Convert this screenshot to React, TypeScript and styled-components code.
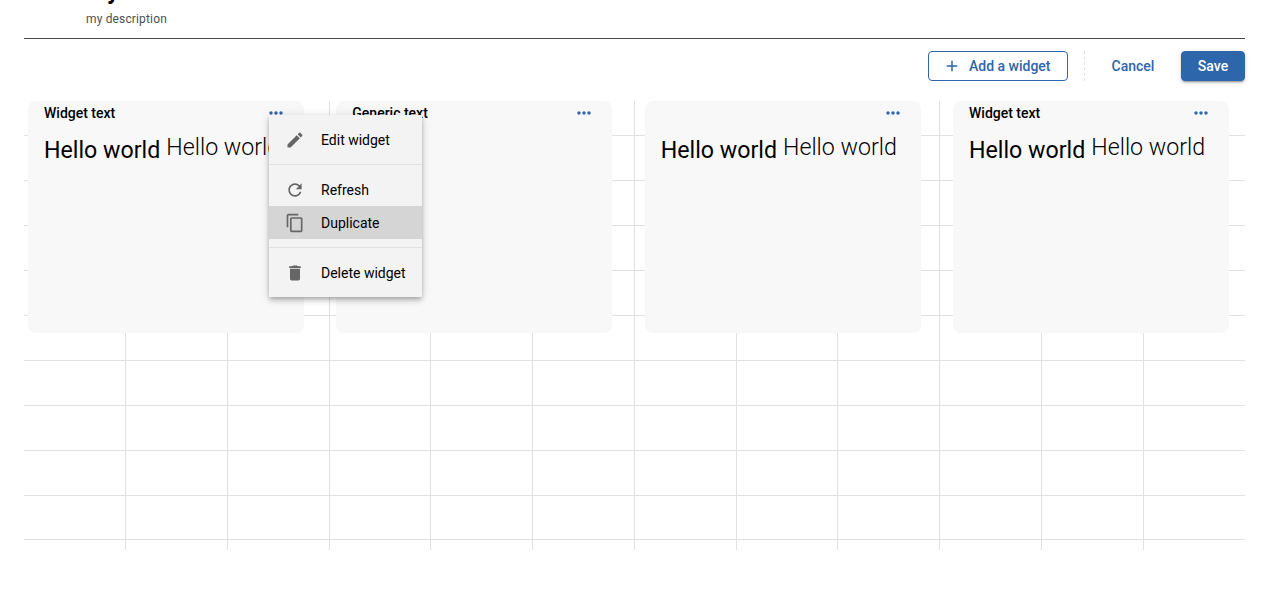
import React from "react";
import styled, { createGlobalStyle } from "styled-components";

const BLUE = "#2d66ab";
const LINE = "#e1e1e1";

const columnLines = [101, 203, 305, 406, 508, 610, 712, 813, 915, 1017, 1119];
const rowLines = [34, 79, 124, 169, 214, 259, 304, 349, 394, 438];

const gridBackground = [
  ...columnLines.map((x) => `linear-gradient(${LINE}, ${LINE}) ${x}px 0 / 1px 100% no-repeat`),
  ...rowLines.map((y) => `linear-gradient(${LINE}, ${LINE}) 0 ${y}px / 100% 1px no-repeat`),
].join(", ");

const GlobalStyle = createGlobalStyle`
  * { box-sizing: border-box; }
  html, body { margin: 0; background: #fff; overflow: hidden; }
  body { font-family: Roboto, "Liberation Sans", sans-serif; font-size: 14px; color: #000; }
`;

const Page = styled.div`
  height: 590px;
  padding: 0 35px 0 24px;
  overflow: hidden;
`;

const Header = styled.header`
  display: flow-root;
  height: 39px;
  padding-left: 62px;
  border-bottom: 1px solid #4a4a4a;
`;

const Title = styled.h1`
  margin: -21px 0 0;
  font-size: 24px;
  line-height: 24px;
  font-weight: 700;
`;

const Description = styled.p`
  margin: 8px 0 0;
  font-size: 12px;
  line-height: 16px;
  letter-spacing: 0.15px;
  color: #4f4f4f;
`;

const Toolbar = styled.div`
  display: flex;
  justify-content: flex-end;
  padding: 12px 0 20px;
`;

const Button = styled.button<{ $variant: "outlined" | "text" | "contained" }>`
  display: flex;
  align-items: center;
  justify-content: center;
  height: 30px;
  padding: 0 16px;
  border: 1px solid ${(p) => (p.$variant === "text" ? "transparent" : BLUE)};
  border-radius: 4px;
  background: ${(p) => (p.$variant === "contained" ? BLUE : "transparent")};
  color: ${(p) => (p.$variant === "contained" ? "#fff" : BLUE)};
  box-shadow: ${(p) =>
    p.$variant === "contained"
      ? "0 3px 1px -2px rgba(0,0,0,.2), 0 2px 2px rgba(0,0,0,.14), 0 1px 5px rgba(0,0,0,.12)"
      : "none"};
  font: 500 14px/24px Roboto, sans-serif;
`;

const AddButton = styled(Button)`
  width: 140px;
  gap: 8px;
  justify-content: flex-start;
  padding: 0 0 0 14px;
`;

const CancelButton = styled(Button)`
  width: 76px;
  margin: 0 10px;
`;

const SaveButton = styled(Button)`
  width: 64px;
`;

const Separator = styled.div`
  width: 1px;
  height: 30px;
  margin-left: 16px;
  border-left: 1px dashed #e0e0e0;
`;

const Board = styled.main`
  display: grid;
  grid-template-columns: repeat(4, 276px);
  column-gap: 32.33px;
  align-items: start;
  height: 449px;
  padding-left: 4px;
  background: ${gridBackground};
`;

const Card = styled.section`
  height: 232px;
  padding: 0 16px;
  border-radius: 8px;
  background: #f8f8f8;
`;

const CardHeader = styled.div`
  position: relative;
  display: flex;
  align-items: center;
  justify-content: space-between;
  height: 24px;
`;

const CardTitle = styled.h2`
  margin: 0;
  font-size: 14px;
  line-height: 20px;
  font-weight: 500;
`;

const MoreButton = styled.button`
  display: flex;
  margin: 0 2px 0 auto;
  padding: 0;
  border: 0;
  background: none;
  color: ${BLUE};
`;

const CardBody = styled.div`
  display: flex;
  gap: 6px;
  padding-top: 8px;
  font-size: 23.2px;
  line-height: 28px;
  white-space: nowrap;
`;

const Strong = styled.span`
  padding-top: 3px;
`;

const Thin = styled.span`
  font-weight: 300;
`;

const Menu = styled.div`
  position: absolute;
  top: 14px;
  left: 225px;
  z-index: 2;
  width: 153px;
  padding: 8px 0;
  background: #f3f3f3;
  box-shadow: 0 2px 4px -1px rgba(0,0,0,.2), 0 4px 5px rgba(0,0,0,.14), 0 1px 10px rgba(0,0,0,.12);
`;

const MenuItem = styled.div<{ $active?: boolean }>`
  display: flex;
  align-items: center;
  gap: 16px;
  height: 33px;
  padding: 0 16px;
  background: ${(p) => (p.$active ? "#d5d5d5" : "transparent")};
  font-size: 14px;
  line-height: 21px;
  white-space: nowrap;
`;

const MenuLabel = styled.span`
  padding-top: 2px;
`;

const Divider = styled.hr`
  height: 1px;
  margin: 8px 0;
  border: 0;
  background: #e0e0e0;
`;

const Svg = styled.svg`
  flex: none;
  fill: currentColor;
`;

const MenuIcon = styled(Svg)`
  color: #666;
`;

const paths = {
  add: "M19 13h-6v6h-2v-6H5v-2h6V5h2v6h6z",
  more: "M6 10c-1.1 0-2 .9-2 2s.9 2 2 2 2-.9 2-2-.9-2-2-2m12 0c-1.1 0-2 .9-2 2s.9 2 2 2 2-.9 2-2-.9-2-2-2m-6 0c-1.1 0-2 .9-2 2s.9 2 2 2 2-.9 2-2-.9-2-2-2",
  edit: "M3 17.25V21h3.75L17.81 9.94l-3.75-3.75zM20.71 7.04c.39-.39.39-1.02 0-1.41l-2.34-2.34a.9959.9959 0 0 0-1.41 0l-1.83 1.83 3.75 3.75z",
  refresh:
    "M17.65 6.35C16.2 4.9 14.21 4 12 4c-4.42 0-7.99 3.58-7.99 8s3.57 8 7.99 8c3.73 0 6.84-2.55 7.73-6h-2.08c-.82 2.33-3.04 4-5.65 4-3.31 0-6-2.69-6-6s2.69-6 6-6c1.66 0 3.14.69 4.22 1.78L13 11h7V4z",
  copy: "M16 1H4c-1.1 0-2 .9-2 2v14h2V3h12zm3 4H8c-1.1 0-2 .9-2 2v14c0 1.1.9 2 2 2h11c1.1 0 2-.9 2-2V7c0-1.1-.9-2-2-2m0 16H8V7h11z",
  trash: "M6 19c0 1.1.9 2 2 2h8c1.1 0 2-.9 2-2V7H6zM19 4h-3.5l-1-1h-5l-1 1H5v2h14z",
};

const menuGroups: { icon: keyof typeof paths; label: string; active?: boolean }[][] = [
  [{ icon: "edit", label: "Edit widget" }],
  [
    { icon: "refresh", label: "Refresh" },
    { icon: "copy", label: "Duplicate", active: true },
  ],
  [{ icon: "trash", label: "Delete widget" }],
];

const widgets = [
  { title: "Widget text", text: true, menu: true },
  { title: "Generic text", text: false },
  { title: "", text: true },
  { title: "Widget text", text: true },
];

const WidgetMenu = () => (
  <Menu>
    {menuGroups.map((group, index) => (
      <React.Fragment key={index}>
        {index > 0 && <Divider />}
        {group.map((item) => (
          <MenuItem key={item.label} $active={item.active}>
            <MenuIcon width="20" height="20" viewBox="0 0 24 24">
              <path d={paths[item.icon]} />
            </MenuIcon>
            <MenuLabel>{item.label}</MenuLabel>
          </MenuItem>
        ))}
      </React.Fragment>
    ))}
  </Menu>
);

export default function App() {
  return (
    <>
      <GlobalStyle />
      <Page>
        <Header>
          <Title>My</Title>
          <Description>my description</Description>
        </Header>
        <Toolbar>
          <AddButton $variant="outlined">
            <Svg width="18" height="18" viewBox="0 0 24 24">
              <path d={paths.add} />
            </Svg>
            Add a widget
          </AddButton>
          <Separator />
          <CancelButton $variant="text">Cancel</CancelButton>
          <SaveButton $variant="contained">Save</SaveButton>
        </Toolbar>
        <Board>
          {widgets.map((widget, index) => (
            <Card key={index}>
              <CardHeader>
                {widget.title && <CardTitle>{widget.title}</CardTitle>}
                <MoreButton aria-label="More actions">
                  <Svg width="20" height="20" viewBox="0 0 24 24">
                    <path d={paths.more} />
                  </Svg>
                </MoreButton>
                {widget.menu && <WidgetMenu />}
              </CardHeader>
              {widget.text && (
                <CardBody>
                  <Strong>Hello world</Strong>
                  <Thin>Hello world</Thin>
                </CardBody>
              )}
            </Card>
          ))}
        </Board>
      </Page>
    </>
  );
}
